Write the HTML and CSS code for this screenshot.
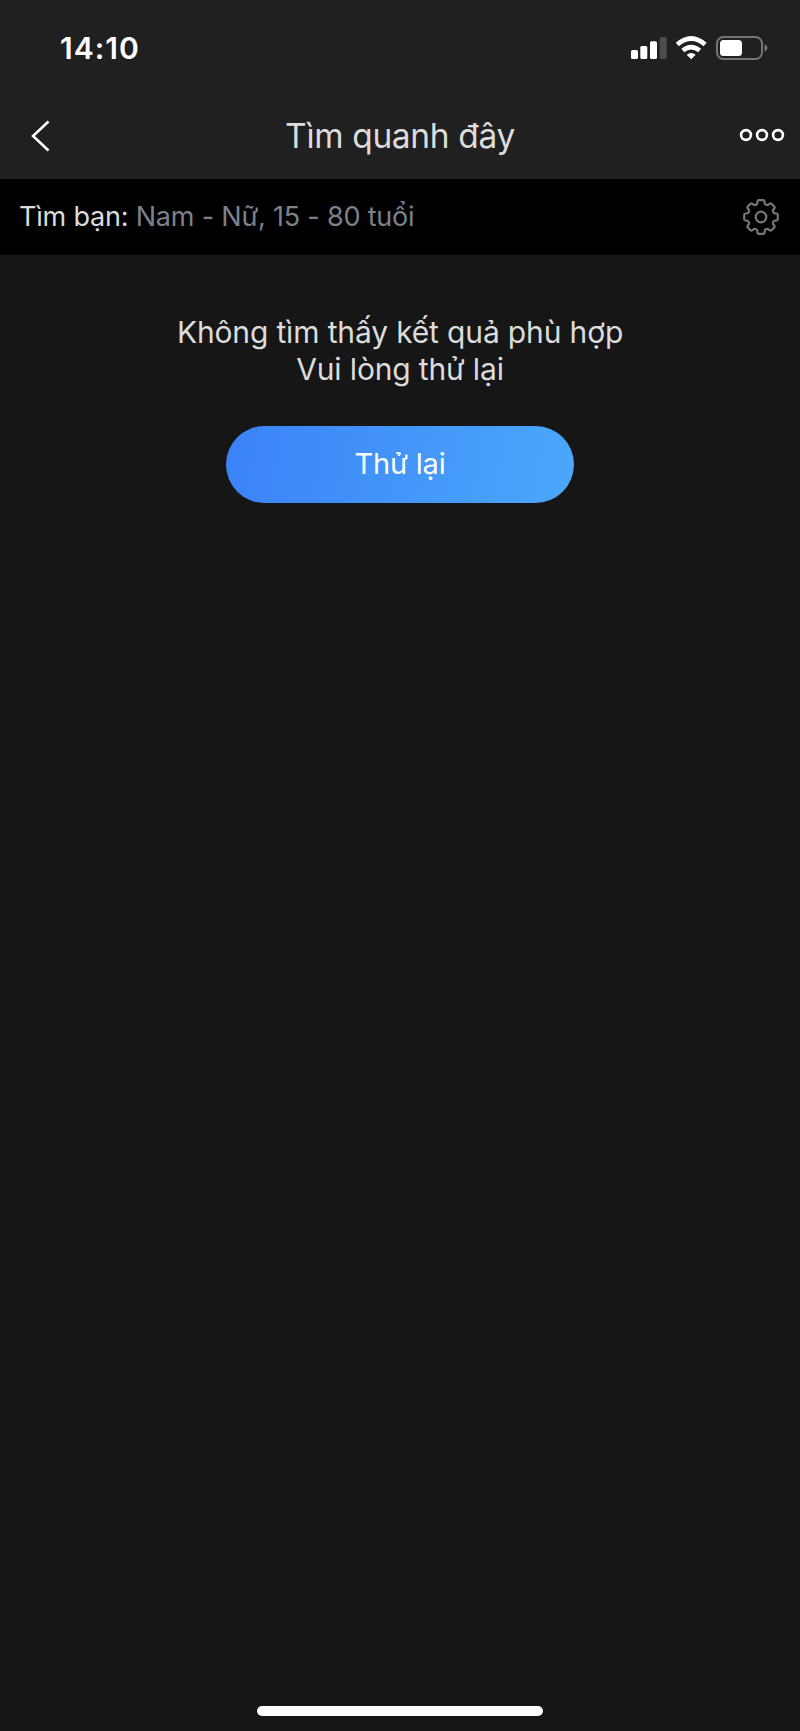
FILE: index.html
```html
<!DOCTYPE html>
<html lang="vi">
<head>
<meta charset="utf-8">
<title>Tìm quanh đây</title>
<link rel="stylesheet" href="styles.css">
</head>
<body>
<div class="screen">
  <header class="header">
    <div class="status">
      <span class="time">14:10</span>
      <svg class="status-icons" width="138" height="26" viewBox="0 0 138 26">
        <g fill="#fff">
          <rect x="1" y="15" width="7" height="9" rx="1.5"/>
          <rect x="10.3" y="11" width="7" height="13" rx="1.5"/>
          <rect x="20" y="6.300" width="7" height="17.700" rx="1.500"/>
          <rect x="29.700" y="2" width="7" height="22" rx="1.500" fill="#4d4d4d"/>
        </g>
        <g fill="none" stroke="#fff" stroke-width="4.600">
          <path d="M47.300 9.600Q61.200 -2.600 75.100 9.600"/>
          <path d="M52.800 15.600Q61.200 8.600 69.600 15.600"/>
        </g>
        <path d="M61.200 24.200L56.700 19.800Q61.200 16 65.700 19.800Z" fill="#fff"/>
        <rect x="87" y="2" width="45" height="22" rx="6.500" fill="none" stroke="#757575" stroke-width="2"/>
        <rect x="90" y="5" width="22" height="16" rx="3.500" fill="#fff"/>
        <path d="M134.500 9.200Q137.500 10.500 137.500 13Q137.500 15.500 134.500 16.800Z" fill="#757575"/>
      </svg>
    </div>
    <nav class="navbar">
      <svg class="back" width="20" height="32" viewBox="0 0 20 32"><path d="M17.500 1.500L2 16L17.500 30.500" fill="none" stroke="#fff" stroke-width="2.500"/></svg>
      <h1 class="title">Tìm quanh đây</h1>
      <svg class="more" width="46" height="14" viewBox="0 0 46 14"><g fill="none" stroke="#fff" stroke-width="2.600"><circle cx="7" cy="7" r="4.900"/><circle cx="23" cy="7" r="4.900"/><circle cx="39" cy="7" r="4.900"/></g></svg>
    </nav>
  </header>
  <div class="filter">
    <p class="filter-text"><span class="label">Tìm bạn:</span> <span class="value">Nam - Nữ, 15 - 80 tuổi</span></p>
    <svg class="gear" width="38" height="38" viewBox="-19 -19 38 38">
      <g fill="none" stroke="#777" stroke-width="2.200" stroke-linejoin="round">
        <path d="M-2.200 -16.800H2.200Q3.300 -16.800 3.500 -15.500L3.700 -13.600Q4 -12.700 5 -12.300Q6.300 -11.600 7.100 -12.100L8.500 -13.200Q9.600 -14 10.500 -13.200L13.200 -10.500Q14 -9.600 13.200 -8.500L12.100 -7.100Q11.600 -6.300 12.300 -5Q12.700 -4 13.600 -3.700L15.500 -3.500Q16.800 -3.300 16.800 -2.200V2.200Q16.800 3.300 15.500 3.500L13.600 3.700Q12.700 4 12.300 5Q11.600 6.300 12.100 7.100L13.200 8.500Q14 9.600 13.200 10.500L10.500 13.200Q9.600 14 8.500 13.200L7.100 12.100Q6.300 11.600 5 12.300Q4 12.700 3.700 13.600L3.500 15.500Q3.300 16.800 2.200 16.800H-2.200Q-3.300 16.800 -3.500 15.500L-3.700 13.600Q-4 12.700 -5 12.300Q-6.300 11.600 -7.100 12.100L-8.500 13.200Q-9.600 14 -10.500 13.200L-13.200 10.500Q-14 9.600 -13.200 8.500L-12.100 7.100Q-11.600 6.300 -12.300 5Q-12.700 4 -13.600 3.700L-15.500 3.500Q-16.800 3.300 -16.800 2.200V-2.200Q-16.800 -3.300 -15.500 -3.500L-13.600 -3.700Q-12.700 -4 -12.300 -5Q-11.600 -6.300 -12.100 -7.100L-13.200 -8.500Q-14 -9.600 -13.200 -10.500L-10.500 -13.200Q-9.600 -14 -8.500 -13.200L-7.100 -12.100Q-6.300 -11.600 -5 -12.300Q-4 -12.700 -3.700 -13.600L-3.500 -15.500Q-3.300 -16.800 -2.200 -16.800Z"/>
        <circle r="5.300"/>
      </g>
    </svg>
  </div>
  <main class="content">
    <p class="message">Không tìm thấy kết quả phù hợp<br><span class="message-second">Vui lòng thử lại</span></p>
    <button class="retry">Thử lại</button>
  </main>
  <div class="home-indicator"></div>
</div>
</body>
</html>
```
FILE: styles.css
```css
* { box-sizing: border-box; margin: 0; }
body { background: #161616; font-family: Inter, sans-serif; }
.screen { height: 1731px; display: flex; flex-direction: column; }
.header { height: 179px; background: #202020; }
.status { height: 96px; display: flex; align-items: center; justify-content: space-between; padding: 0 32px 0 60px; }
.time { font-size: 30px; font-weight: 600; letter-spacing: 1px; color: #fff; }
.status-icons { display: block; }
.navbar { height: 83px; display: grid; grid-template-columns: 100px 1fr 100px; align-items: center; padding-bottom: 3px; }
.back { margin-left: 30.5px; }
.title { font-size: 33.5px; line-height: 40px; font-weight: 400; letter-spacing: -0.35px; color: #dcdcdc; text-align: center; white-space: nowrap; }
.more { justify-self: end; margin: 0 15px 3px 0; }
.filter { height: 76px; background: #000; display: flex; align-items: center; justify-content: space-between; padding: 0 20px 0 19px; }
.filter-text { padding-bottom: 1px; font-size: 27px; font-weight: 400; letter-spacing: -0.2px; white-space: nowrap; }
.label { color: #dcdcdc; }
.value { color: #7c818a; }
.content { flex: 1; display: flex; flex-direction: column; align-items: center; padding-top: 59px; }
.message { font-size: 30px; line-height: 37px; font-weight: 400; letter-spacing: -0.15px; color: #dcdcdc; text-align: center; white-space: nowrap; }
.retry { width: 348px; height: 77px; margin-top: 38px; padding: 0 0 3px; border: 0; border-radius: 39px; background: linear-gradient(100deg, #3b82f8, #4ba8fa); color: #fff; font: 400 29px Inter, sans-serif; letter-spacing: -0.2px; }
.home-indicator { width: 286px; height: 10px; margin: 0 auto 15px; border-radius: 5px; background: #fff; }
```
